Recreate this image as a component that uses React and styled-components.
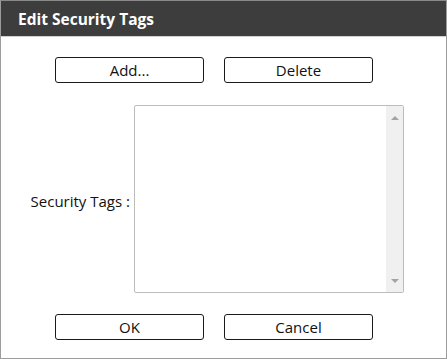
import React from "react";
import styled, { createGlobalStyle } from "styled-components";

const Global = createGlobalStyle`
  html, body { margin: 0; padding: 0; background: #ffffff; }
  * { box-sizing: border-box; }
`;

const Dialog = styled.div`
  width: 447px;
  height: 359px;
  border: 1px solid #9c9c9c;
  border-top-color: #8a8a8a;
  background: #ffffff;
  display: flex;
  flex-direction: column;
  font-family: "Open Sans", "Noto Sans", sans-serif;
`;

const TitleBar = styled.div`
  height: 36px;
  background: #3d3d3d;
  border-bottom: 1px solid #d0d0d0;
  display: flex;
  align-items: center;
  padding-left: 17px;
  color: #ffffff;
  font-weight: 700;
  font-size: 15.5px;
  flex-shrink: 0;
`;

const Body = styled.div`
  flex: 1;
  display: flex;
  flex-direction: column;
  padding: 20px 0 0 54px;
`;

const ButtonRow = styled.div`
  display: flex;
  gap: 20px;
  margin-top: ${(p) => p.$top || 0}px;
`;

const Button = styled.button`
  width: 149px;
  height: 26px;
  border: 1px solid #1a1a1a;
  border-radius: 3px;
  background: #ffffff;
  font-family: "Open Sans", "Noto Sans", sans-serif;
  font-size: 15px;
  color: #111111;
  padding: 0;
  display: flex;
  align-items: center;
  justify-content: center;
`;

const FieldRow = styled.div`
  display: flex;
  align-items: center;
  margin-top: 22px;
  margin-left: -54px;
`;

const Label = styled.div`
  width: 130px;
  text-align: right;
  padding-right: 1px;
  font-size: 15px;
  color: #111111;
  margin-top: 3px;
`;

const ListBox = styled.div`
  margin-left: 3px;
  width: 270px;
  height: 188px;
  border: 1px solid #bcbcbc;
  border-radius: 2px;
  display: flex;
  justify-content: flex-end;
`;

const ScrollBar = styled.div`
  width: 17px;
  background: #f0f0f0;
  display: flex;
  flex-direction: column;
  justify-content: space-between;
  align-items: center;
  padding: 10px 0 9px;
`;

const Arrow = styled.div`
  width: 0;
  height: 0;
  border-left: 4.5px solid transparent;
  border-right: 4.5px solid transparent;
  ${(p) =>
    p.$down
      ? "border-top: 4px solid #a3a3a3;"
      : "border-bottom: 4px solid #a3a3a3;"}
`;

export default function App() {
  return (
    <>
      <Global />
      <Dialog>
        <TitleBar>Edit Security Tags</TitleBar>
        <Body>
          <ButtonRow>
            <Button>Add...</Button>
            <Button>Delete</Button>
          </ButtonRow>
          <FieldRow>
            <Label>Security Tags :</Label>
            <ListBox>
              <ScrollBar>
                <Arrow />
                <Arrow $down />
              </ScrollBar>
            </ListBox>
          </FieldRow>
          <ButtonRow $top={21}>
            <Button>OK</Button>
            <Button>Cancel</Button>
          </ButtonRow>
        </Body>
      </Dialog>
    </>
  );
}
